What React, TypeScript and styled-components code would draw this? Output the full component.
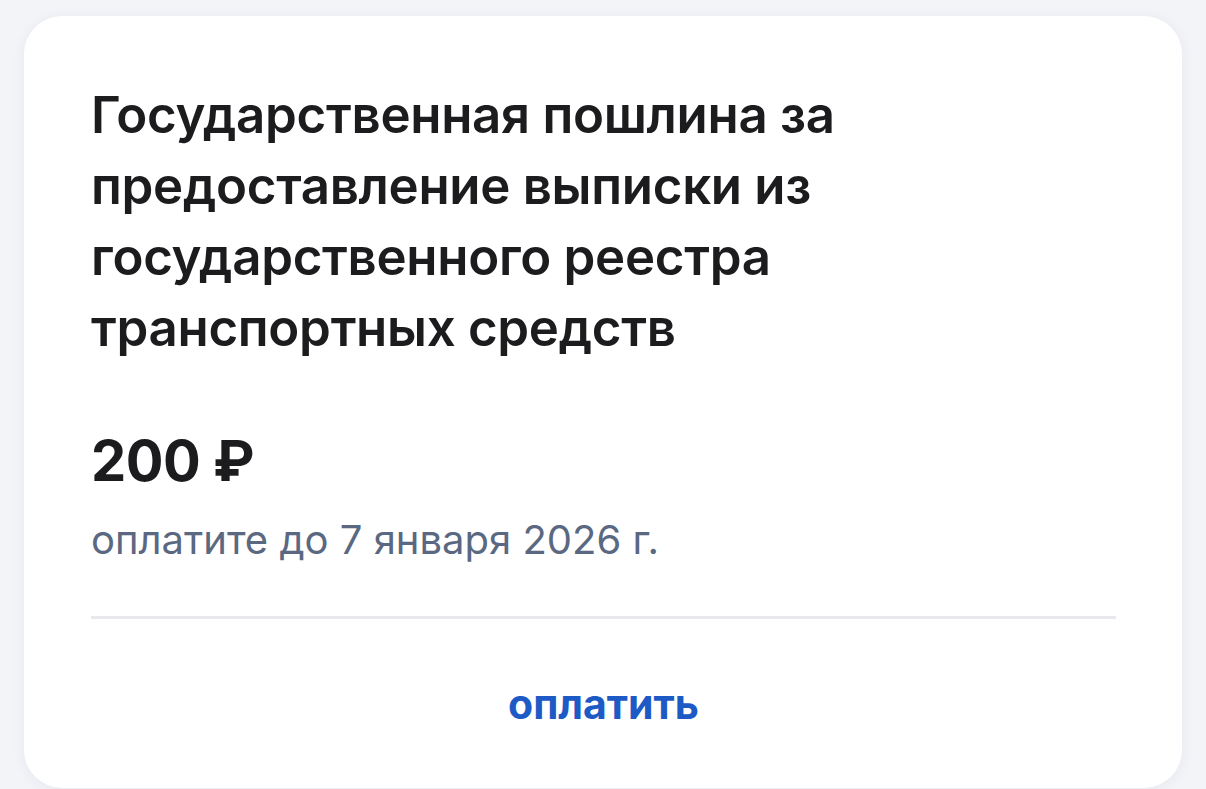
import React from 'react';
import styled, { createGlobalStyle } from 'styled-components';

const GlobalStyle = createGlobalStyle`
    html, body {
        margin: 0;
        padding: 0;
        background-color: #f3f4f8;
    }
    body {
        font-family: Inter, 'Noto Sans', sans-serif;
        -webkit-font-smoothing: antialiased;
    }
`;

const Page = styled.div`
    padding: 16px 24px 0;
    height: 789px;
    box-sizing: border-box;
    overflow: hidden;
`;

const Card = styled.div`
    background-color: #ffffff;
    border-radius: 38px;
    height: 772px;
    box-sizing: border-box;
    padding: 63px 66px 0 67px;
    box-shadow: 0 2px 14px rgba(40, 50, 90, 0.06);
    display: flex;
    flex-direction: column;
`;

const Title = styled.h1`
    margin: 0;
    font-size: 51px;
    line-height: 71px;
    font-weight: 600;
    color: #1c1c1f;
    letter-spacing: -0.3px;
    max-width: 800px;
`;

const Amount = styled.div`
    margin-top: 66px;
    font-size: 56px;
    line-height: 64px;
    font-weight: 700;
    color: #1c1c1f;
    letter-spacing: -0.5px;
`;

const DueDate = styled.div`
    margin-top: 23px;
    font-size: 40px;
    line-height: 48px;
    font-weight: 400;
    color: #5a6881;
`;

const Divider = styled.hr`
    margin: 52px 0 0;
    border: 0;
    height: 3px;
    background-color: #e8e9ed;
`;

const PayButton = styled.button`
    align-self: center;
    margin-top: 60px;
    background: none;
    border: 0;
    padding: 0;
    font-family: inherit;
    font-size: 41px;
    font-weight: 700;
    color: #1d5ac6;
    cursor: pointer;
`;

export default function App() {
    return (
        <>
            <GlobalStyle />
            <Page>
                <Card>
                    <Title>
                        Государственная пошлина за предоставление выписки из государственного реестра транспортных
                        средств
                    </Title>
                    <Amount>200 ₽</Amount>
                    <DueDate>оплатите до 7 января 2026 г.</DueDate>
                    <Divider />
                    <PayButton>оплатить</PayButton>
                </Card>
            </Page>
        </>
    );
}
